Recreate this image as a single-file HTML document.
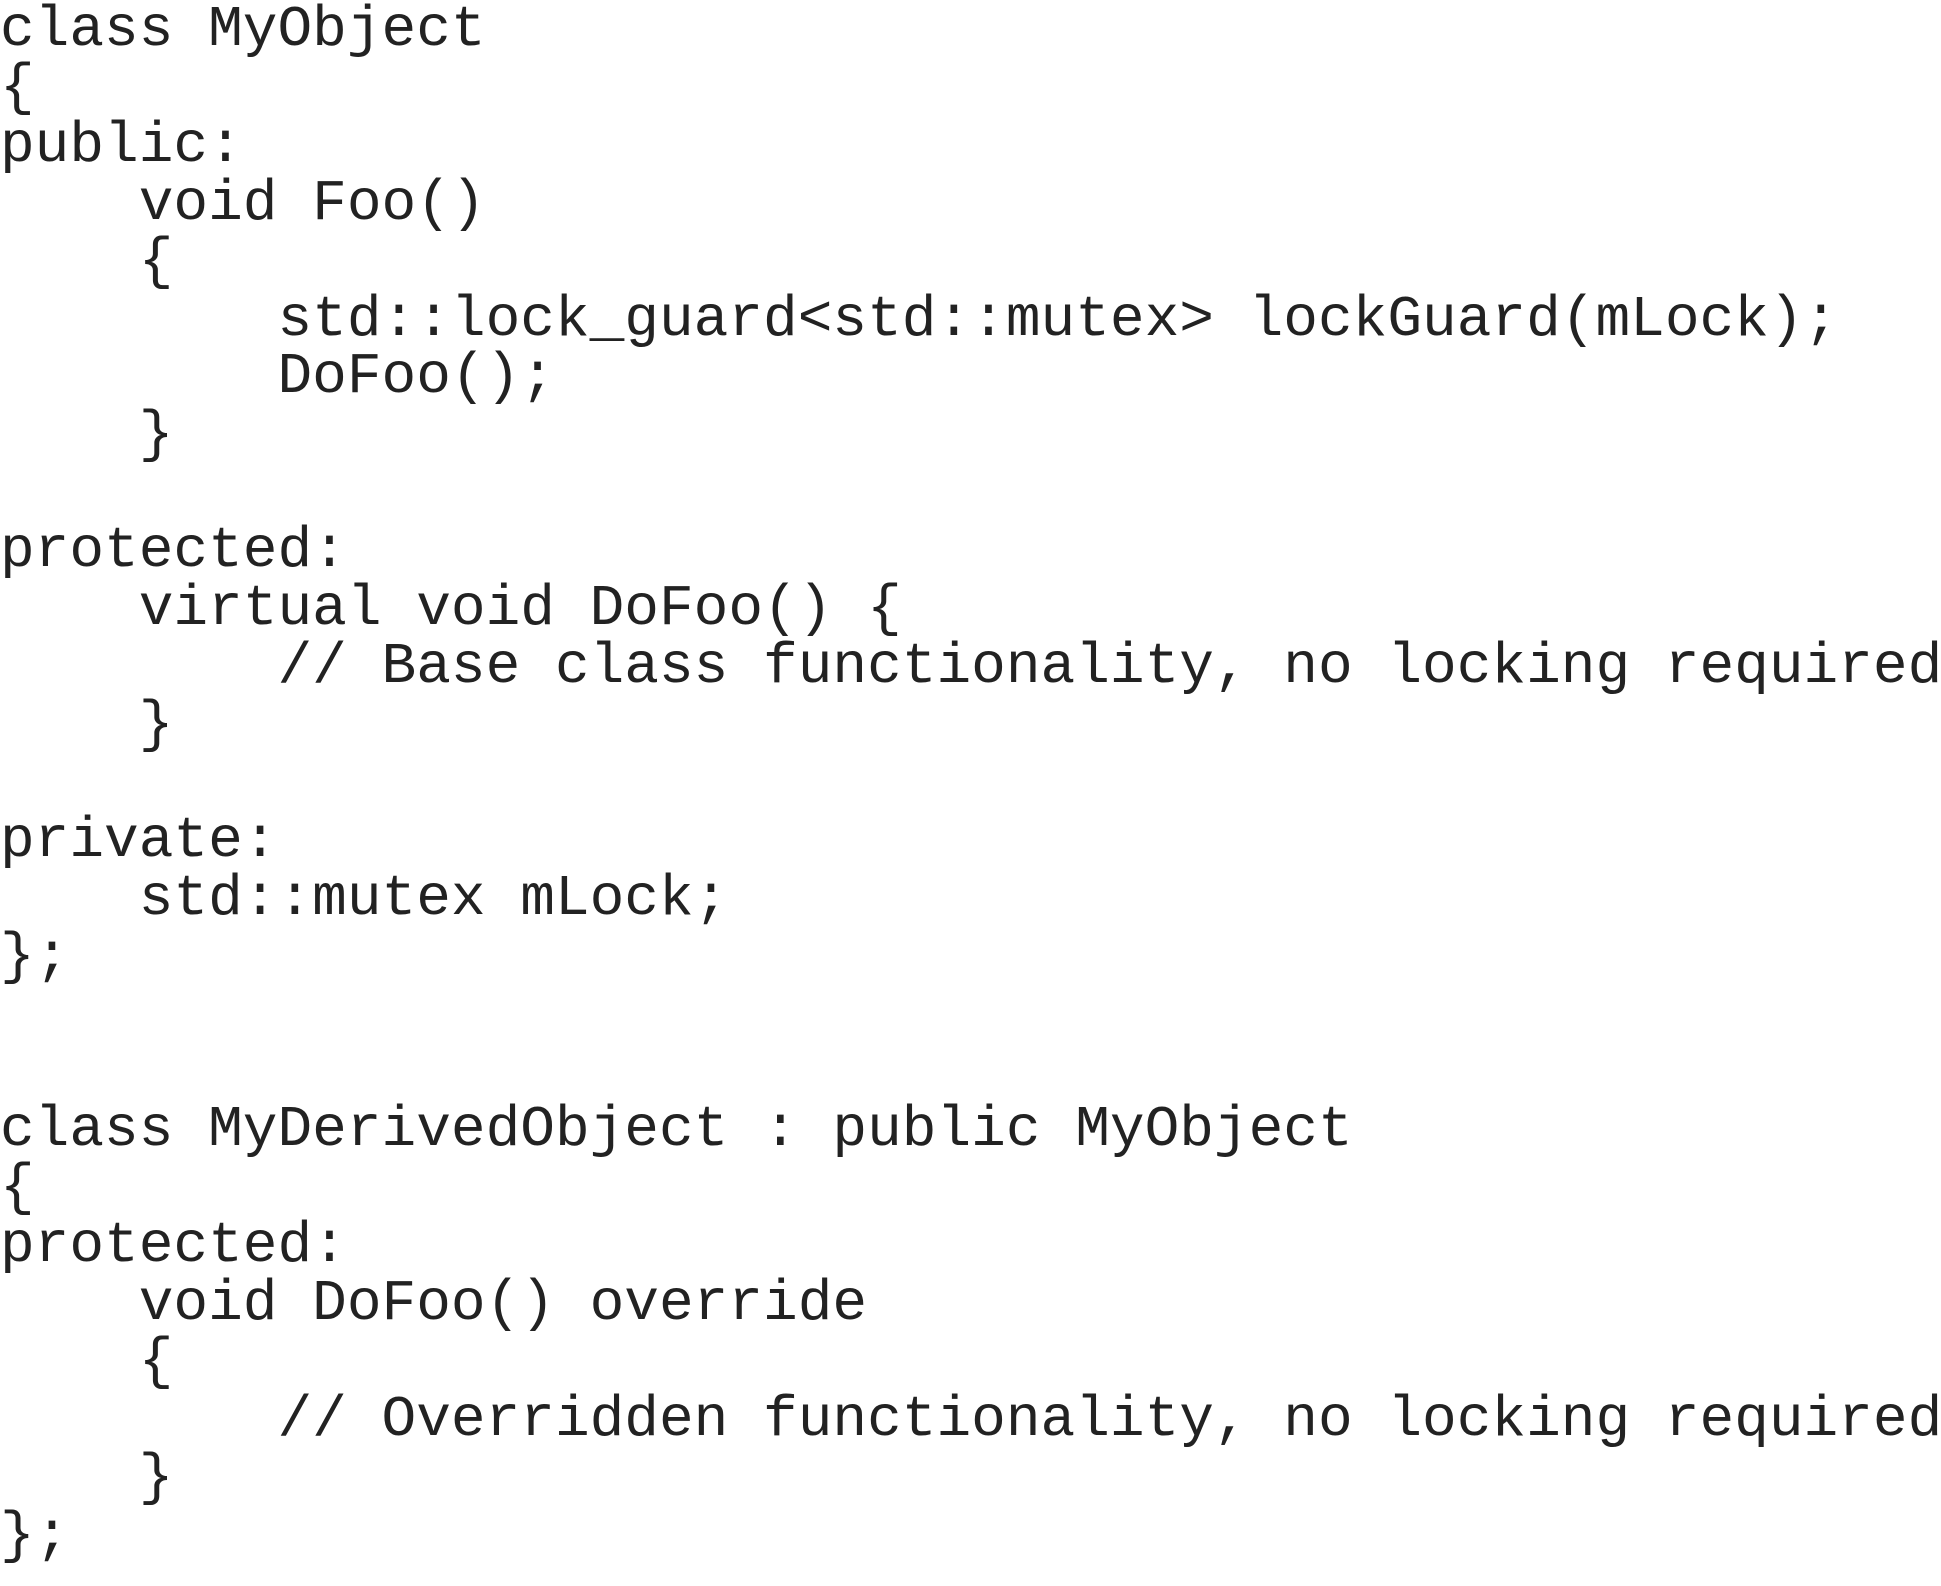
<!DOCTYPE html>
<html><head><meta charset="utf-8"><style>
html,body{margin:0;padding:0;background:#fff;width:1941px;height:1586px;overflow:hidden}
pre{margin:0;padding:2px 0 0 0;font-family:"Liberation Mono",monospace;font-size:57.8px;line-height:57.9px;color:#222;white-space:pre}
</style></head><body><pre>class MyObject
{
public:
    void Foo()
    {
        std::lock_guard&lt;std::mutex&gt; lockGuard(mLock);
        DoFoo();
    }

protected:
    virtual void DoFoo() {
        // Base class functionality, no locking required
    }

private:
    std::mutex mLock;
};


class MyDerivedObject : public MyObject
{
protected:
    void DoFoo() override
    {
        // Overridden functionality, no locking required
    }
};</pre></body></html>
